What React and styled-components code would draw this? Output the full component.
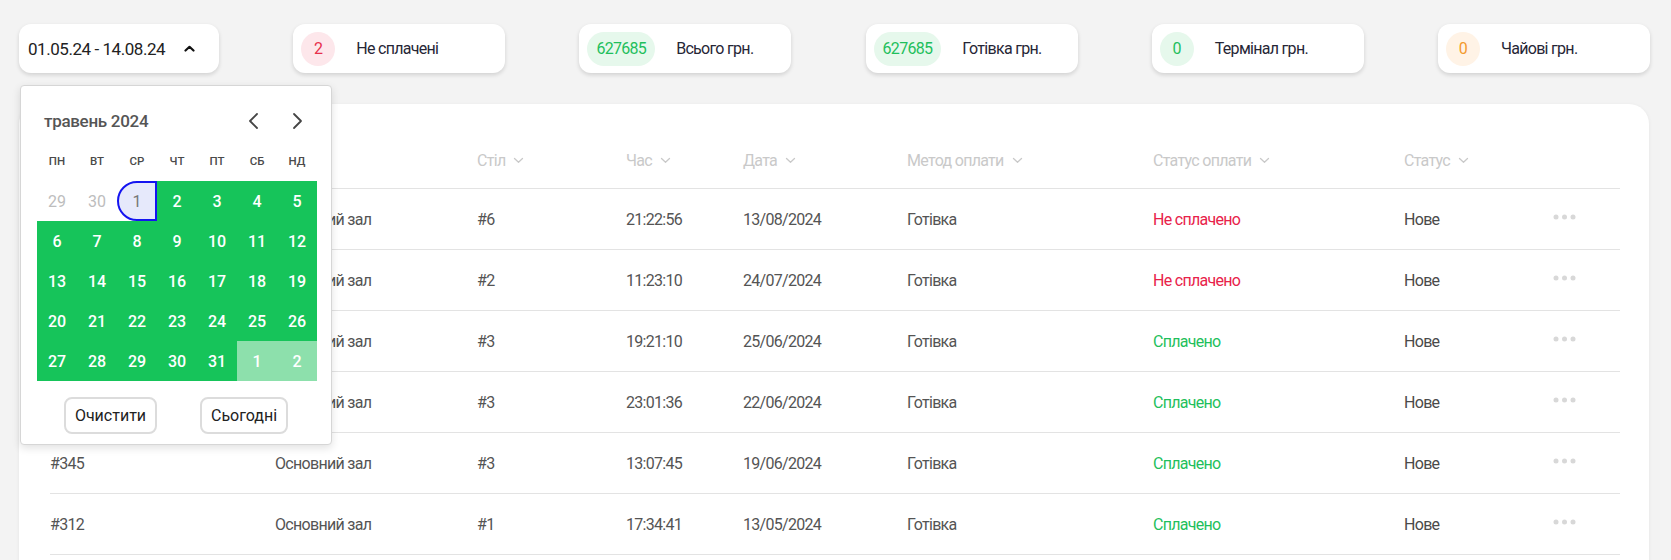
import React from 'react'
import styled, { createGlobalStyle } from 'styled-components'

const GlobalStyle = createGlobalStyle`
  body {
    margin: 0;
    background: #f3f3f3;
    font-family: Roboto, "Liberation Sans", sans-serif;
  }
`

const Page = styled.div`
  width: 1671px;
  min-height: 560px;
  letter-spacing: -0.7px;
  color: #2b2b3a;
`

const TopBar = styled.div`
  display: flex;
  justify-content: space-between;
  align-items: flex-start;
  padding: 24px 21px 0 19px;
`

const DateWrap = styled.div`
  position: relative;
  z-index: 5;
`

const DateButton = styled.div`
  width: 200px;
  height: 49px;
  box-sizing: border-box;
  display: flex;
  align-items: center;
  padding-left: 9px;
  gap: 19px;
  background: #fff;
  border-radius: 12px;
  box-shadow: 0 2px 4px rgba(0, 0, 0, 0.14);
  font-size: 17px;
  letter-spacing: -0.45px;
  color: #222;
`

const StatCard = styled.div`
  width: 212px;
  height: 49px;
  box-sizing: border-box;
  display: flex;
  align-items: center;
  gap: 21px;
  padding: 0 8px;
  background: #fff;
  border-radius: 12px;
  box-shadow: 0 2px 4px rgba(0, 0, 0, 0.14);
  font-size: 16px;
  color: #262636;
`

const Badge = styled.div`
  min-width: 34px;
  height: 34px;
  box-sizing: border-box;
  padding: 0 9px;
  border-radius: 17px;
  display: flex;
  align-items: center;
  justify-content: center;
  font-size: 16px;
  color: ${p => p.fg};
  background: ${p => p.bg};
`

/* ---------- calendar popup ---------- */

const Popup = styled.div`
  position: absolute;
  top: 61px;
  left: 1px;
  width: 312px;
  height: 360px;
  box-sizing: border-box;
  padding: 0 16px;
  background: #fff;
  border: 1px solid #d6d6d6;
  border-radius: 4px;
  box-shadow: 0 3px 8px rgba(0, 0, 0, 0.12);
  letter-spacing: 0;
  font-family: Roboto, "Liberation Sans", sans-serif;
`

const CalHead = styled.div`
  height: 60px;
  padding: 9px 12px 0 7px;
  box-sizing: border-box;
  display: flex;
  align-items: center;
  justify-content: space-between;
`

const CalTitle = styled.div`
  font-size: 17px;
  font-weight: 500;
  color: #555;
  letter-spacing: -0.3px;
`

const NavButtons = styled.div`
  display: flex;
  gap: 33px;
  align-items: center;
`

const WeekRow = styled.div`
  display: grid;
  grid-template-columns: repeat(7, 40px);
  height: 30px;
  align-items: center;
  margin-bottom: 5px;
`

const WeekDay = styled.div`
  text-align: center;
  font-size: 11.5px;
  font-weight: 500;
  color: #4a4a4a;
`

const DaysGrid = styled.div`
  display: grid;
  grid-template-columns: repeat(7, 40px);
  grid-auto-rows: 40px;
`

const Day = styled.div`
  display: flex;
  align-items: center;
  justify-content: center;
  font-size: 16px;
  box-sizing: border-box;
  color: ${p => (p.kind === 'muted' ? '#bdbdbd' : p.kind === 'start' ? '#777' : '#fff')};
  background: ${p =>
    p.kind === 'range' ? '#16c45a' : p.kind === 'next' ? '#8de0ac' : p.kind === 'start' ? '#e6e9fb' : 'transparent'};
  border: ${p => (p.kind === 'start' ? '2px solid #1414f0' : 'none')};
  border-radius: ${p => (p.kind === 'start' ? '20px 0 0 20px' : '0')};
  font-weight: ${p => (p.kind === 'muted' || p.kind === 'start' ? 400 : 500)};
`

const CalFooter = styled.div`
  display: flex;
  justify-content: space-evenly;
  margin: 16px -16px 0;
`

const CalButton = styled.button`
  height: 37px;
  padding: 0 9px;
  background: #fff;
  border: 2px solid #dcdcdc;
  border-radius: 8px;
  font-family: Roboto, "Liberation Sans", sans-serif;
  font-size: 16px;
  color: #222;
`

/* ---------- table ---------- */

const TableCard = styled.div`
  margin: 31px 22px 0 19px;
  padding: 0 29px 40px 31px;
  background: #fff;
  border-radius: 20px;
  box-shadow: 0 1px 4px rgba(0, 0, 0, 0.06);
`

const cols = '225px 202px 149px 117px 164px 246px 251px 149px 1fr'

const HeadRow = styled.div`
  display: grid;
  grid-template-columns: ${cols};
  align-items: center;
  height: 85px;
  box-sizing: border-box;
  padding-top: 28px;
  border-bottom: 1px solid #e3e3e3;
`

const HeadCell = styled.div`
  display: flex;
  align-items: center;
  gap: 8px;
  font-size: 16px;
  color: #c9c9c9;
`

const Row = styled.div`
  display: grid;
  grid-template-columns: ${cols};
  align-items: center;
  height: 61px;
  box-sizing: border-box;
  border-bottom: 1px solid #e3e3e3;
`

const Cell = styled.div`
  font-size: 16px;
  color: ${p => p.color || '#545454'};
`

const ActionCell = styled.div`
  display: flex;
  align-items: center;
  height: 16px;
  margin-top: -4px;
`

const Chevron = ({ up }) => (
  <svg width="11" height="7" viewBox="0 0 11 7">
    <path
      d={up ? 'M1.5 5.5 L5.5 1.8 L9.5 5.5' : 'M1.5 1.5 L5.5 5.2 L9.5 1.5'}
      fill="none"
      stroke={up ? '#111' : '#c9c9c9'}
      strokeWidth={up ? 2.2 : 1.3}
      strokeLinecap="round"
      strokeLinejoin="round"
    />
  </svg>
)

const Arrow = ({ dir }) => (
  <svg width="11" height="18" viewBox="0 0 11 18">
    <path
      d={dir === 'left' ? 'M9 2 L2 9 L9 16' : 'M2 2 L9 9 L2 16'}
      fill="none"
      stroke="#454545"
      strokeWidth="1.8"
      strokeLinecap="round"
      strokeLinejoin="round"
    />
  </svg>
)

const Dots = () => (
  <svg width="23" height="6" viewBox="0 0 23 6">
    <circle cx="3" cy="3" r="2.5" fill="#d8d8d8" />
    <circle cx="11.5" cy="3" r="2.5" fill="#d8d8d8" />
    <circle cx="20" cy="3" r="2.5" fill="#d8d8d8" />
  </svg>
)

const stats = [
  { value: '2', label: 'Не сплачені', fg: '#e7304b', bg: '#fde7eb' },
  { value: '627685', label: 'Всього грн.', fg: '#1fbf5c', bg: '#e6f8ec' },
  { value: '627685', label: 'Готівка грн.', fg: '#1fbf5c', bg: '#e6f8ec' },
  { value: '0', label: 'Термінал грн.', fg: '#1fbf5c', bg: '#e6f8ec' },
  { value: '0', label: 'Чайові грн.', fg: '#f39a2e', bg: '#fff3e6' },
]

const weekDays = ['ПН', 'ВТ', 'СР', 'ЧТ', 'ПТ', 'СБ', 'НД']

const days = [
  { d: 29, kind: 'muted' },
  { d: 30, kind: 'muted' },
  { d: 1, kind: 'start' },
  ...Array.from({ length: 30 }, (_, i) => ({ d: i + 2, kind: 'range' })),
  { d: 1, kind: 'next' },
  { d: 2, kind: 'next' },
]

const headers = ['Номер', 'Зал', 'Стіл', 'Час', 'Дата', 'Метод оплати', 'Статус оплати', 'Статус']

const orders = [
  ['#412', 'Основний зал', '#6', '21:22:56', '13/08/2024', 'Готівка', false],
  ['#398', 'Основний зал', '#2', '11:23:10', '24/07/2024', 'Готівка', false],
  ['#371', 'Основний зал', '#3', '19:21:10', '25/06/2024', 'Готівка', true],
  ['#356', 'Основний зал', '#3', '23:01:36', '22/06/2024', 'Готівка', true],
  ['#345', 'Основний зал', '#3', '13:07:45', '19/06/2024', 'Готівка', true],
  ['#312', 'Основний зал', '#1', '17:34:41', '13/05/2024', 'Готівка', true],
]

export default function App() {
  return (
    <Page>
      <GlobalStyle />
      <TopBar>
        <DateWrap>
          <DateButton>
            01.05.24 - 14.08.24
            <Chevron up />
          </DateButton>

          <Popup>
            <CalHead>
              <CalTitle>травень 2024</CalTitle>
              <NavButtons>
                <Arrow dir="left" />
                <Arrow dir="right" />
              </NavButtons>
            </CalHead>
            <WeekRow>
              {weekDays.map(w => (
                <WeekDay key={w}>{w}</WeekDay>
              ))}
            </WeekRow>
            <DaysGrid>
              {days.map((day, i) => (
                <Day key={i} kind={day.kind}>
                  {day.d}
                </Day>
              ))}
            </DaysGrid>
            <CalFooter>
              <CalButton>Очистити</CalButton>
              <CalButton>Сьогодні</CalButton>
            </CalFooter>
          </Popup>
        </DateWrap>

        {stats.map(s => (
          <StatCard key={s.label}>
            <Badge fg={s.fg} bg={s.bg}>
              {s.value}
            </Badge>
            {s.label}
          </StatCard>
        ))}
      </TopBar>

      <TableCard>
        <HeadRow>
          {headers.map(h => (
            <HeadCell key={h}>
              {h}
              <Chevron />
            </HeadCell>
          ))}
          <div />
        </HeadRow>
        {orders.map(o => (
          <Row key={o[0]}>
            <Cell>{o[0]}</Cell>
            <Cell>{o[1]}</Cell>
            <Cell>{o[2]}</Cell>
            <Cell>{o[3]}</Cell>
            <Cell>{o[4]}</Cell>
            <Cell>{o[5]}</Cell>
            <Cell color={o[6] ? '#1fbf5c' : '#e8224a'}>{o[6] ? 'Сплачено' : 'Не сплачено'}</Cell>
            <Cell color="#4a4a4a">Нове</Cell>
            <ActionCell>
              <Dots />
            </ActionCell>
          </Row>
        ))}
      </TableCard>
    </Page>
  )
}
